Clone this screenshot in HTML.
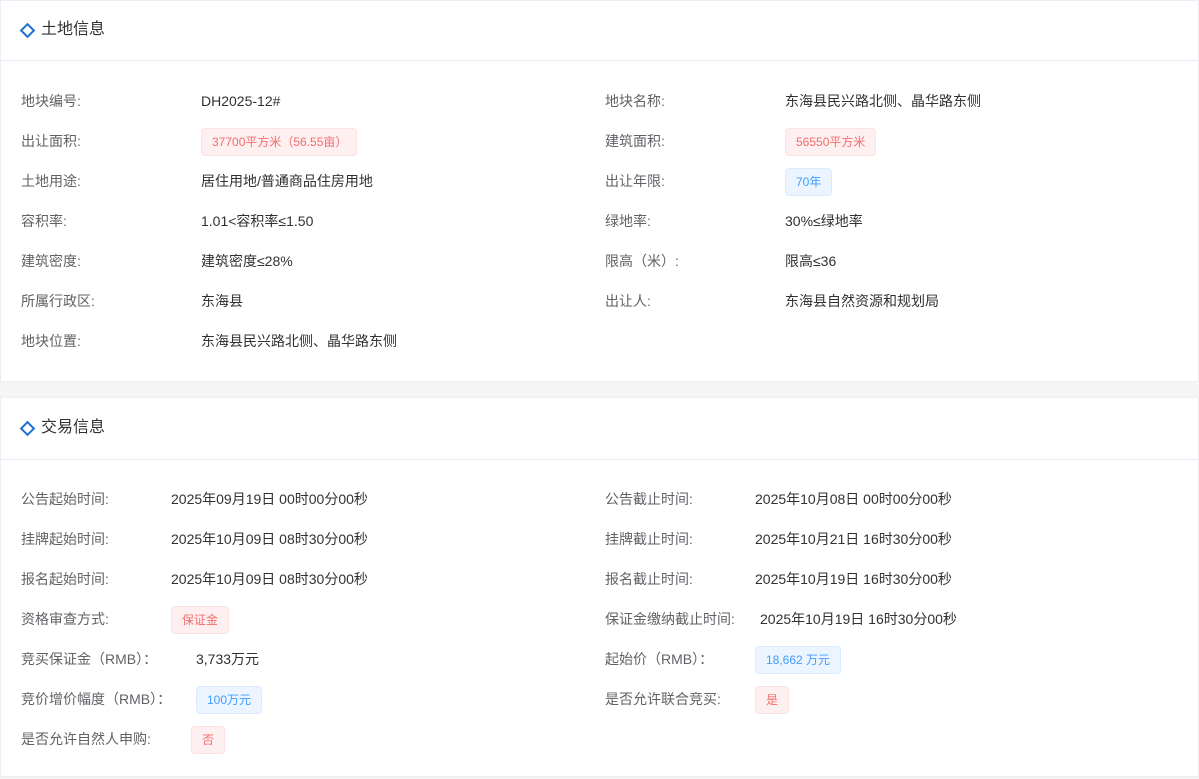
<!DOCTYPE html>
<html><head><meta charset="utf-8"><style>
*{margin:0;padding:0;box-sizing:border-box}
body{width:1199px;height:779px;background:#f5f5f5;font-family:"Liberation Sans","Noto Sans CJK SC",sans-serif;position:relative;overflow:hidden}
.card{position:absolute;left:0;width:1199px;background:#fff;border:1px solid #ebeef5}
.hd{position:absolute;left:0;right:0;top:0;height:60px;border-bottom:1px solid #e8e8f0}
.dia{position:absolute;left:21px;width:11px;height:11px;border:2.5px solid #1e6fd0;transform:rotate(45deg)}
.tt{position:absolute;left:40px;font-size:16px;color:#303133;line-height:20px}
.t{position:absolute;font-size:14px;line-height:20px;white-space:nowrap}
.l{color:#606266}.v{color:#303133}
.tag{position:absolute;height:28px;line-height:26px;padding:0 10px;font-size:12px;border:1px solid;border-radius:4px;white-space:nowrap}
.r{background:#fef0f0;border-color:#fde2e2;color:#f56c6c}
.b{background:#ecf5ff;border-color:#d9ecff;color:#409eff}
</style></head><body>
<div class="card" style="top:0;height:382px">
<div class="hd"></div><div class="dia" style="top:24px"></div><div class="tt" style="top:19px">土地信息</div>
</div>
<div class="card" style="top:397px;height:380px">
<div class="hd" style="height:62px"></div><div class="dia" style="top:25px"></div><div class="tt" style="top:20px">交易信息</div>
</div>

<div class="t l" style="left:21px;top:91px">地块编号:</div><div class="t v" style="left:201px;top:91px">DH2025-12#</div>
<div class="t l" style="left:605px;top:91px">地块名称:</div><div class="t v" style="left:785px;top:91px">东海县民兴路北侧、晶华路东侧</div>
<div class="t l" style="left:21px;top:131px">出让面积:</div><div class="tag r" style="left:201px;top:128px;width:156px">37700平方米（56.55亩）</div>
<div class="t l" style="left:605px;top:131px">建筑面积:</div><div class="tag r" style="left:785px;top:128px">56550平方米</div>
<div class="t l" style="left:21px;top:171px">土地用途:</div><div class="t v" style="left:201px;top:171px">居住用地/普通商品住房用地</div>
<div class="t l" style="left:605px;top:171px">出让年限:</div><div class="tag b" style="left:785px;top:168px">70年</div>
<div class="t l" style="left:21px;top:211px">容积率:</div><div class="t v" style="left:201px;top:211px">1.01&lt;容积率≤1.50</div>
<div class="t l" style="left:605px;top:211px">绿地率:</div><div class="t v" style="left:785px;top:211px">30%≤绿地率</div>
<div class="t l" style="left:21px;top:251px">建筑密度:</div><div class="t v" style="left:201px;top:251px">建筑密度≤28%</div>
<div class="t l" style="left:605px;top:251px">限高（米）:</div><div class="t v" style="left:785px;top:251px">限高≤36</div>
<div class="t l" style="left:21px;top:291px">所属行政区:</div><div class="t v" style="left:201px;top:291px">东海县</div>
<div class="t l" style="left:605px;top:291px">出让人:</div><div class="t v" style="left:785px;top:291px">东海县自然资源和规划局</div>
<div class="t l" style="left:21px;top:331px">地块位置:</div><div class="t v" style="left:201px;top:331px">东海县民兴路北侧、晶华路东侧</div>

<div class="t l" style="left:21px;top:489px">公告起始时间:</div><div class="t v" style="left:171px;top:489px">2025年09月19日 00时00分00秒</div>
<div class="t l" style="left:605px;top:489px">公告截止时间:</div><div class="t v" style="left:755px;top:489px">2025年10月08日 00时00分00秒</div>
<div class="t l" style="left:21px;top:529px">挂牌起始时间:</div><div class="t v" style="left:171px;top:529px">2025年10月09日 08时30分00秒</div>
<div class="t l" style="left:605px;top:529px">挂牌截止时间:</div><div class="t v" style="left:755px;top:529px">2025年10月21日 16时30分00秒</div>
<div class="t l" style="left:21px;top:569px">报名起始时间:</div><div class="t v" style="left:171px;top:569px">2025年10月09日 08时30分00秒</div>
<div class="t l" style="left:605px;top:569px">报名截止时间:</div><div class="t v" style="left:755px;top:569px">2025年10月19日 16时30分00秒</div>
<div class="t l" style="left:21px;top:609px">资格审查方式:</div><div class="tag r" style="left:171px;top:606px">保证金</div>
<div class="t l" style="left:605px;top:609px">保证金缴纳截止时间:</div><div class="t v" style="left:760px;top:609px">2025年10月19日 16时30分00秒</div>
<div class="t l" style="left:21px;top:649px">竞买保证金（RMB）：</div><div class="t v" style="left:196px;top:649px">3,733万元</div>
<div class="t l" style="left:605px;top:649px">起始价（RMB）：</div><div class="tag b" style="left:755px;top:646px">18,662 万元</div>
<div class="t l" style="left:21px;top:689px">竞价增价幅度（RMB）：</div><div class="tag b" style="left:196px;top:686px">100万元</div>
<div class="t l" style="left:605px;top:689px">是否允许联合竞买:</div><div class="tag r" style="left:755px;top:686px">是</div>
<div class="t l" style="left:21px;top:729px">是否允许自然人申购:</div><div class="tag r" style="left:191px;top:726px">否</div>
</body></html>
